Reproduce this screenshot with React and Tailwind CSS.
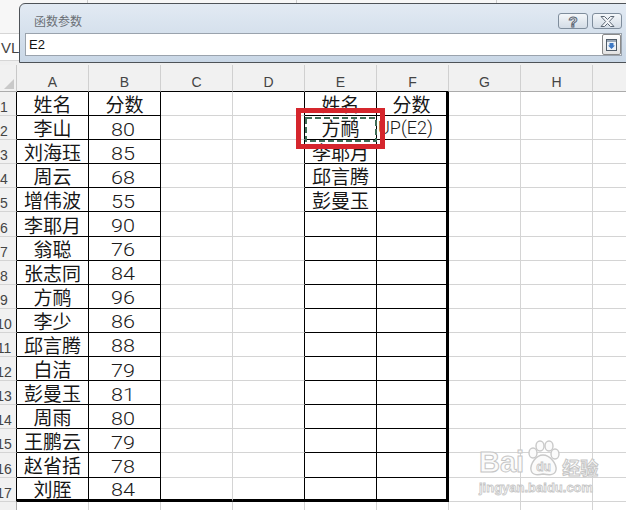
import React from 'react';

const CJK = "font-['Noto_Sans_CJK_SC',sans-serif]";

const colA = ['姓名','李山','刘海珏','周云','增伟波','李耶月','翁聪','张志同','方鸸','李少','邱言腾','白洁','彭曼玉','周雨','王鹏云','赵省括','刘胵'];
const colB = ['分数','80','85','68','55','90','76','84','96','86','88','79','81','80','79','78','84'];
const colE = ['姓名','方鸸','李耶月','邱言腾','彭曼玉'];
const letters = ['A','B','C','D','E','F','G','H',''];

function Text({ v }) {
  if (/^\d+$/.test(v)) {
    return (
      <span className="inline-block scale-x-[1.2] pt-[4px] -ml-[3px] font-['Roboto',sans-serif] font-light text-[18px] leading-none text-[#1a1a1a]">{v}</span>
    );
  }
  return <span className={`${CJK} text-[19px] leading-none text-[#161616]`}>{v}</span>;
}

function rightCls(c) {
  if (c === 5) return 'border-r-[3px] border-r-black';
  if (c === 0 || c === 1 || c === 3 || c === 4) return 'border-r border-r-black';
  return 'border-r border-r-[#d4d4d4]';
}

function bottomCls(r, c) {
  if (r === 17 && c <= 5) return 'border-b-[3px] border-b-black';
  if (r <= 17 && (c === 0 || c === 1 || c === 4 || c === 5)) return 'border-b border-b-black';
  return 'border-b border-b-[#d4d4d4]';
}

function cellContent(r, c) {
  if (r > 17) return null;
  if (c === 0) return <Text v={colA[r - 1]} />;
  if (c === 1) return <Text v={colB[r - 1]} />;
  if (c === 4 && r <= 5) return <Text v={colE[r - 1]} />;
  if (c === 5 && r === 1) return <Text v="分数" />;
  return null;
}

function Row({ r }) {
  const isData = r <= 17;
  return (
    <div className="flex h-[24.1px] shrink-0">
      <div className={`w-[17px] shrink-0 overflow-hidden bg-[#f1f1f1] border-b border-b-[#d4d4d4] flex items-end pb-[1px] ${isData ? 'border-r border-r-black' : 'border-r border-r-[#ababab]'}`}>
        <div className="w-[26px] -ml-[9px] shrink-0 text-center text-[14px] leading-none text-[#444] font-['Liberation_Sans',sans-serif]">{r}</div>
      </div>
      {letters.map((l, c) => (
        <div
          key={c}
          className={`w-[72px] shrink-0 flex items-center ${c === 5 && r === 2 ? 'justify-start overflow-visible' : 'justify-center'} ${rightCls(isData ? c : 9)} ${bottomCls(r, c)}`}
        >
          {c === 5 && r === 2 ? (
            <span className="pt-[1px] pl-[1px] font-['Roboto',sans-serif] font-light text-[18px] leading-none text-[#1a1a1a] whitespace-nowrap">UP(E2)</span>
          ) : (
            cellContent(r, c)
          )}
        </div>
      ))}
    </div>
  );
}

function HelpIcon() {
  return (
    <span className="font-['Liberation_Sans',sans-serif] font-bold text-[15px] leading-none text-[#f4f6f9] [-webkit-text-stroke:1px_#5d6875]">?</span>
  );
}

function CloseIcon() {
  return (
    <svg width="15" height="11" viewBox="0 0 15 11">
      <polygon
        points="1,0.5 4.5,0.5 7.5,3.5 10.5,0.5 14,0.5 9.3,5.5 14,10.5 10.5,10.5 7.5,7.5 4.5,10.5 1,10.5 5.7,5.5"
        fill="#f4f6f9"
        stroke="#5d6875"
        strokeWidth="1"
        strokeLinejoin="round"
      />
    </svg>
  );
}

function CollapseIcon() {
  return (
    <svg width="11" height="12" viewBox="0 0 11 12">
      <rect x="0.5" y="0.5" width="10" height="11" fill="#eef2f7" stroke="#4f5b68" />
      <rect x="1" y="1" width="9" height="2" fill="#9aa8b8" />
      <polygon points="3.5,4 7.5,4 7.5,6.5 9,6.5 5.5,10 2,6.5 3.5,6.5" fill="#3d78c4" />
    </svg>
  );
}

function Paw() {
  return (
    <svg width="38" height="38" viewBox="0 0 38 38">
      <g fill="#fbfbfb" stroke="#c9c9c9" strokeWidth="1.4">
        <ellipse cx="9" cy="13" rx="4" ry="5" />
        <ellipse cx="16" cy="6" rx="4" ry="5" />
        <ellipse cx="25" cy="6" rx="4" ry="5" />
        <ellipse cx="31" cy="14" rx="4" ry="5" />
        <path d="M19 15 C 12 15, 6 24, 7 30 C 8 36, 15 35, 19 34 C 24 35, 31 36, 32 30 C 33 24, 26 15, 19 15 Z" />
      </g>
      <text x="19.5" y="31" textAnchor="middle" fontFamily="Liberation Sans, sans-serif" fontWeight="bold" fontSize="12" fill="#fbfbfb" stroke="#c4c4c4" strokeWidth="0.8">du</text>
    </svg>
  );
}

export default function App() {
  const rows = [];
  for (let r = 1; r <= 18; r++) rows.push(<Row key={r} r={r} />);

  return (
    <div className="relative w-[626px] h-[510px] overflow-hidden bg-white">
      {/* ribbon remnant */}
      <div className="h-[34px] bg-[#f7f7f7] border-b border-b-[#d6d6d6] flex items-start">
        <div className="w-[88px] h-[4px] border-r border-r-[#cdcdcd]" />
        <div className="w-[209px] h-[4px] border-r border-r-[#cdcdcd]" />
        <div className="w-[200px] h-[4px] border-r border-r-[#cdcdcd]" />
      </div>
      {/* formula bar */}
      <div className="h-[27px] bg-white border-b border-b-[#d6d6d6] flex items-center pl-[1px] pt-[2px] font-['Liberation_Sans',sans-serif] text-[15px] text-[#444]">
        VLOOKUP(E2)
      </div>
      <div className="h-[4px] bg-[#efefef]" />
      {/* column headers */}
      <div className="flex h-[27px] bg-[#f1f1f1]">
        <div className="w-[17px] shrink-0 border-r border-r-[#c8c8c8] border-b border-b-[#ababab] flex items-end justify-end pr-[2px] pb-[2px]">
          <svg width="10" height="10" viewBox="0 0 10 10">
            <polygon points="10,0 10,10 0,10" fill="#c9c9c9" />
          </svg>
        </div>
        {letters.map((l, c) => (
          <div
            key={c}
            className={`w-[72px] shrink-0 flex items-end justify-center pb-[2px] border-r border-r-[#d0d0d0] font-['Liberation_Sans',sans-serif] text-[14px] leading-none text-[#444] ${c <= 5 ? 'border-b border-b-black' : 'border-b border-b-[#ababab]'}`}
          >
            {l}
          </div>
        ))}
      </div>
      {/* grid rows */}
      <div className="flex flex-col">{rows}</div>

      {/* marching ants around E2 */}
      <svg className="absolute left-[305px] top-[117px]" width="72" height="25" viewBox="0 0 72 25">
        <rect x="1" y="1" width="70" height="23" fill="none" stroke="#3f6c56" strokeWidth="2" strokeDasharray="6 3" />
      </svg>
      {/* red highlight */}
      <div className="absolute left-[296px] top-[108px] w-[89px] h-[41px] border-[5px] border-[#d5262d]" />

      {/* dialog */}
      <div className="absolute left-[19px] top-[3px] w-[640px] h-[60px] rounded-tl-[6px] border border-[#4e5358] bg-linear-to-b from-[#e2eaf3] to-[#c9d7e6] flex flex-col pl-[5px] pr-[36px] pt-[9px]">
        <div className="h-[16px] flex items-center justify-between">
          <span className={`${CJK} ml-[9px] text-[12px] leading-none text-[#6a6f75]`}>函数参数</span>
          <div className="flex gap-[4px]">
            <div className="w-[30px] h-[16px] rounded-[3px] border border-[#7f8d9c] bg-linear-to-b from-[#f4f7fa] to-[#d3dce6] flex items-center justify-center">
              <HelpIcon />
            </div>
            <div className="w-[30px] h-[16px] rounded-[3px] border border-[#7f8d9c] bg-linear-to-b from-[#f4f7fa] to-[#d3dce6] flex items-center justify-center">
              <CloseIcon />
            </div>
          </div>
        </div>
        <div className="mt-[4px] h-[23px] bg-white border border-[#9aa3ad] flex items-center">
          <span className="flex-1 pl-[3px] font-['Liberation_Sans',sans-serif] text-[13px] leading-none text-[#111]">E2</span>
          <div className="w-[19px] h-[21px] rounded-[2px] border border-[#8a8a8a] bg-linear-to-b from-white to-[#e2e2e2] flex items-center justify-center">
            <CollapseIcon />
          </div>
        </div>
      </div>

      {/* watermark */}
      <div className="absolute left-[479px] top-[440px] flex flex-col items-start">
        <div className="flex items-end h-[38px]">
          <span className="font-['Liberation_Sans',sans-serif] font-bold text-[29px] leading-none text-[#fbfbfb] [-webkit-text-stroke:1px_#c6c6c6] pb-[1px]">Bai</span>
          <Paw />
          <span className={`${CJK} font-bold text-[18px] leading-none text-[#fbfbfb] [-webkit-text-stroke:1px_#c6c6c6] pb-[2px]`}>经验</span>
        </div>
        <span className="mt-[3px] font-['Liberation_Sans',sans-serif] font-bold text-[13px] leading-none text-[#fbfbfb] [-webkit-text-stroke:0.8px_#c6c6c6]">jingyan.baidu.com</span>
      </div>
    </div>
  );
}
